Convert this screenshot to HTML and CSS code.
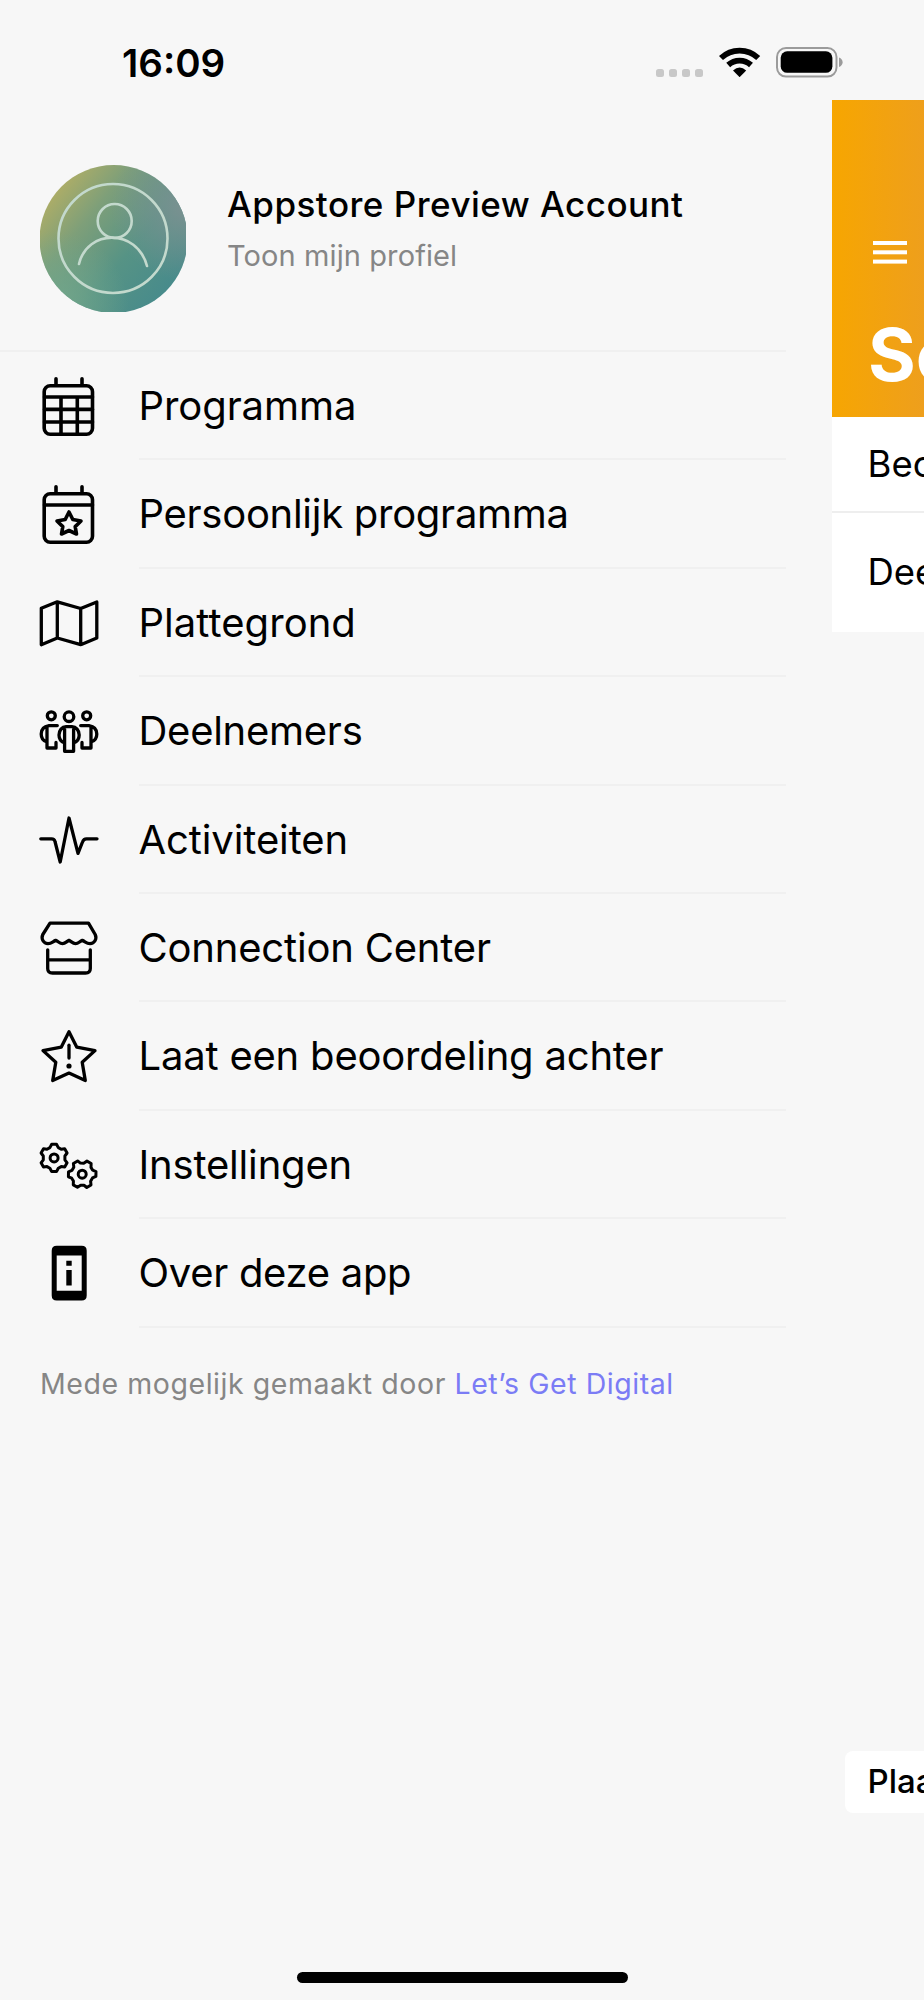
FILE: index.html
```html
<!DOCTYPE html>
<html lang="nl">
<head>
  <meta charset="UTF-8" />
  <meta name="viewport" content="width=device-width, initial-scale=1.0" />
  <title>Menu</title>
  <link rel="stylesheet" href="styles.css">
</head>
<body>
  <header class="status">
    <span class="time">16:09</span>
    <svg class="signal" width="48" height="8" viewBox="0 0 48 8" fill="#c8c8c8">
      <rect x="0" width="8" height="8" rx="2.5" /><rect x="13" width="8" height="8" rx="2.5" />
      <rect x="26" width="8" height="8" rx="2.5" /><rect x="39" width="8" height="8" rx="2.5" />
    </svg>
    <svg class="wifi" width="42" height="30" viewBox="0 0 42 30">
      <g fill="none" stroke="#000" stroke-width="5.8">
        <path d="M2 11 A27 27 0 0 1 39.2 11" />
        <path d="M9.2 18 A17 17 0 0 1 32 18" />
      </g>
      <path d="M20.6 30.2 L14 23.4 Q20.6 17.4 27.2 23.4 Z" />
    </svg>
    <svg class="battery" width="67" height="31" viewBox="0 0 67 31">
      <rect x="1" y="1" width="59.5" height="28.6" rx="9" fill="none" stroke="#9b9b9b" stroke-width="2" />
      <rect x="4.7" y="4.3" width="51.7" height="21.5" rx="6.5" />
      <path d="M63 10.5 Q66.6 12 66.6 15.3 Q66.6 18.6 63 20 Z" fill="#9b9b9b" />
    </svg>
  </header>

  <div class="app">
    <nav class="drawer">
      <div class="profile">
        <svg class="avatar" width="146" height="147" viewBox="0 0 146 147">
          <defs>
            <linearGradient id="avatarBase" x1="0.06" y1="0.2" x2="0.85" y2="0.85">
              <stop offset="0" stop-color="#b0ae66" />
              <stop offset="0.3" stop-color="#7e9f79" />
              <stop offset="0.65" stop-color="#569385" />
              <stop offset="1" stop-color="#488b8b" />
            </linearGradient>
            <radialGradient id="avatarGrey" cx="0.98" cy="0.28" r="0.5">
              <stop offset="0" stop-color="#7b9191" />
              <stop offset="1" stop-color="#7b9191" stop-opacity="0" />
            </radialGradient>
            <radialGradient id="avatarGreen" cx="0.1" cy="0.95" r="0.5">
              <stop offset="0" stop-color="#72a68b" />
              <stop offset="1" stop-color="#72a68b" stop-opacity="0" />
            </radialGradient>
          </defs>
          <circle cx="73.6" cy="74" r="74" fill="url(#avatarBase)" />
          <circle cx="73.6" cy="74" r="74" fill="url(#avatarGrey)" />
          <circle cx="73.6" cy="74" r="74" fill="url(#avatarGreen)" />
          <g fill="none" stroke="#c3d9cd" stroke-width="2.6" stroke-linecap="round">
            <circle cx="73" cy="73.5" r="54.5" />
            <circle cx="74.7" cy="56" r="17" />
            <path d="M39 99 C47 64 97 63 107 101" />
          </g>
        </svg>
        <div class="profile-text">
          <div class="name">Appstore Preview Account</div>
          <div class="sub">Toon mijn profiel</div>
        </div>
      </div>

      <ul class="menu">
        <li>
          <svg class="icon" viewBox="0 0 60 60">
            <rect x="5.2" y="9.7" width="48.3" height="48.5" rx="6" />
            <path d="M17 2.7V9M43 2.7V9M5.5 21H53.5M5.5 33.4H53.5M5.5 46H53.5M22 21V58M38.3 21V58" />
          </svg>
          <span class="label l1">Programma</span>
        </li>
        <li>
          <svg class="icon" viewBox="0 0 60 60">
            <rect x="5.2" y="9.7" width="48.3" height="48.5" rx="6" />
            <path d="M17 2.7V9M43 2.7V9M5.5 21H53.5" />
            <path d="M30 28L33.8 35.5L42 37L36.2 42.6L37.5 50L30 46.5L22.5 50L23.8 42.6L18 37L26.2 35.5Z" />
          </svg>
          <span class="label l2">Persoonlijk programma</span>
        </li>
        <li>
          <svg class="icon thin" viewBox="0 0 60 60">
            <path d="M2.3 15.2L18.3 8.8L41.7 15.5L57.8 9V45L41.7 51.7L18.3 45L2.3 51.7ZM18.3 8.8V45M41.7 15.5V51.7" />
          </svg>
          <span class="label l3">Plattegrond</span>
        </li>
        <li>
          <svg class="icon thin" viewBox="0 0 60 60">
            <circle cx="12.3" cy="14.8" r="4" />
            <circle cx="30" cy="15.7" r="4.8" />
            <circle cx="47.7" cy="14.8" r="4" />
            <path d="M18.3 24.6H10C4 25.5 2.2 29 2.2 33C2.2 37 4.5 40 8 41M8 26V47H17V41.5" />
            <path d="M41.7 24.6H50C56 25.5 57.8 29 57.8 33C57.8 37 55.5 40 52 41M52 26V47H43V41.5" />
            <path d="M25.6 28V50.3H34.6V28M25.6 42C21.5 40.5 20 37 20 34C20 29.5 23 25.7 27 25.7H33C37 25.7 40.2 29.5 40.2 34C40.2 37 38.7 40.5 34.6 42" />
          </svg>
          <span class="label l4">Deelnemers</span>
        </li>
        <li>
          <svg class="icon thin" viewBox="0 0 60 60">
            <path d="M1.8 28.8H12.5Q15.4 28.8 16 31.5L21.2 52L30 8L39 43.3L43.5 32Q44.6 28.8 47.5 28.8H58" />
          </svg>
          <span class="label l5">Activiteiten</span>
        </li>
        <li>
          <svg class="icon thin" viewBox="0 0 60 60">
            <path d="M11 5.2H49.5L56.2 16.5C58.2 21 55.4 25.6 51 25.6C47.5 25.6 46 23.4 43.3 22.4C40.5 23.4 39.5 25.6 36.5 25.6C33.5 25.6 32.5 23.4 30 22.4C27.5 23.4 26.5 25.6 23.5 25.6C20.5 25.6 19.5 23.4 16.7 22.4C14 23.4 12.5 25.6 9 25.6C4.6 25.6 1.8 21 3.8 16.5Z" />
            <path d="M8.7 31.8V50.5Q8.7 55 13.5 55H46.5Q51.3 55 51.3 50.5V31.8M8.7 41.8H51.3" />
          </svg>
          <span class="label l6">Connection Center</span>
        </li>
        <li>
          <svg class="icon thin" viewBox="0 0 60 60">
            <path d="M30 5.8L37.8 21.2L56 24.6L43.2 36.3L46.3 54.6L30 47.1L13.7 54.6L16.8 36.3L4 24.6L22.2 21.2Z" />
            <path d="M30 19.2V32" />
            <circle class="solid" cx="30" cy="40" r="2.6" />
          </svg>
          <span class="label l7">Laat een beoordeling achter</span>
        </li>
        <li>
          <svg class="icon gears" viewBox="0 0 60 60">
            <defs>
              <path id="gear" d="M-2.4 -13.7H2.4L4.2 -10.3L7.1 -8.7L10.6 -9.2L13 -4.9L10.8 -1.9V1.9L13 4.9L10.6 9.2L7.1 8.7L4.2 10.3L2.4 13.7H-2.4L-4.2 10.3L-7.1 8.7L-10.6 9.2L-13 4.9L-10.8 1.9V-1.9L-13 -4.9L-10.6 -9.2L-7.1 -8.7L-4.2 -10.3Z" />
            </defs>
            <use href="#gear" transform="translate(15.1 22.9)" />
            <circle cx="15.1" cy="22.9" r="4" />
            <use href="#gear" transform="translate(43.2 39.2) rotate(30)" />
            <circle cx="43.2" cy="39.2" r="4" />
          </svg>
          <span class="label l8">Instellingen</span>
        </li>
        <li>
          <svg class="icon filled" viewBox="0 0 60 60">
            <path fill-rule="evenodd" d="M17.7 2.8H42.7Q47.7 2.8 47.7 7.8V52.5Q47.7 57.5 42.7 57.5H17.7Q12.7 57.5 12.7 52.5V7.8Q12.7 2.8 17.7 2.8ZM17.7 12.5V47.8H42.7V12.5Z" />
            <path d="M27.3 17.8H32.7V22.8H27.3ZM27.3 27.1H32.7V42.5H27.3Z" />
          </svg>
          <span class="label l9">Over deze app</span>
        </li>
      </ul>

      <p class="credits">Mede mogelijk gemaakt door <a class="link">Let’s Get Digital</a></p>
    </nav>

    <main class="page">
      <div class="hero">
        <svg class="burger" width="34" height="23" viewBox="0 0 34 23" fill="#fff">
          <rect width="34" height="4" /><rect y="9.3" width="34" height="4" /><rect y="18.6" width="34" height="4" />
        </svg>
        <div class="title">So</div>
      </div>
      <div class="row first">Bec</div>
      <div class="row second">Dee</div>
      <div class="chip">Plaa</div>
    </main>
  </div>

  <div class="home-bar"></div>
</body>
</html>
```
FILE: styles.css
```css
* { box-sizing: border-box; }

body {
  margin: 0;
  width: 924px;
  height: 2000px;
  overflow: hidden;
  display: flex;
  flex-direction: column;
  background: #f7f7f7;
  color: #000;
  font-family: Inter, "Liberation Sans", sans-serif;
}

svg { display: block; flex: none; }

/* status bar */
.status {
  height: 100px;
  flex: none;
  display: flex;
  align-items: flex-start;
  padding-left: 122px;
}
.time { width: 534px; padding-top: 40px; font-size: 38.5px; line-height: 46px; font-weight: 600; letter-spacing: 0; }
.signal { margin-top: 69px; }
.wifi { margin: 47px 0 0 15px; }
.battery { margin: 47px 0 0 15px; }

.app { display: flex; height: 1871px; flex: none; }

/* drawer */
.drawer { width: 832px; flex: none; }
.profile {
  width: 786px;
  height: 252px;
  padding: 65px 0 0 40px;
  display: flex;
  gap: 41px;
  border-bottom: 2px solid #f0f0f0;
}
.profile-text { white-space: nowrap; }
.name { margin-top: 17px; font-size: 35px; line-height: 44px; font-weight: 500; letter-spacing: 0.48px; }
.sub { margin-top: 12px; font-size: 29px; line-height: 36px; color: #868686; letter-spacing: 0.1px; }

.menu { list-style: none; margin: 0; padding: 0 0 0 39px; width: 786px; }
.menu li { display: flex; gap: 39.5px; height: 108.4px; }
.icon {
  width: 60px;
  height: 60px;
  margin-top: 24px;
  overflow: visible;
  fill: none;
  stroke: #000;
  stroke-width: 3.6;
  stroke-linecap: round;
  stroke-linejoin: round;
}
.icon.thin { stroke-width: 3.3; }
.icon.gears { stroke-width: 3; }
.icon.filled { fill: #000; stroke: none; }
.icon .solid { fill: #000; stroke: none; }
.label {
  flex: 1;
  border-bottom: 2px solid #f0f0f0;
  font-size: 40px;
  line-height: 107px;
  white-space: nowrap;
}
/* per-label tracking */
.l1 { letter-spacing: -0.08px; }
.l2 { letter-spacing: -0.28px; }
.l3 { letter-spacing: 0.05px; }
.l4 { letter-spacing: -0.27px; }
.l5 { letter-spacing: -0.1px; }
.l6 { letter-spacing: -0.19px; }
.l7 { letter-spacing: -0.2px; }
.l8 { letter-spacing: -0.18px; }
.l9 { letter-spacing: -0.3px; }

.credits { margin: 38px 0 0 40px; font-size: 28.5px; line-height: 36px; color: #868686; white-space: nowrap; letter-spacing: 0.56px; }
.link { color: #7b7cf5; }

/* page pushed aside by the drawer */
.page { width: 92px; overflow: hidden; white-space: nowrap; }
.hero { height: 317px; padding: 141px 0 0 41px; background: linear-gradient(91deg, #f7a600, #ee9f1d); color: #fff; }
.title { margin: 49px 0 0 -5px; font-size: 73px; line-height: 84px; font-weight: 700; }
.row { padding-left: 35.5px; background: #fff; font-size: 36.5px; }
.first { height: 96px; line-height: 95px; border-bottom: 2px solid #eee; }
.second { height: 118.5px; line-height: 118px; }
.chip {
  margin: 1119.5px 0 0 13px;
  padding-left: 22.5px;
  width: 120px;
  height: 62px;
  border-radius: 8px;
  background: #fff;
  font-size: 33px;
  line-height: 61px;
  font-weight: 500;
}

.home-bar { width: 331px; height: 11px; margin: 0.7px 0 0 296.5px; border-radius: 6px; background: #000; }
```
